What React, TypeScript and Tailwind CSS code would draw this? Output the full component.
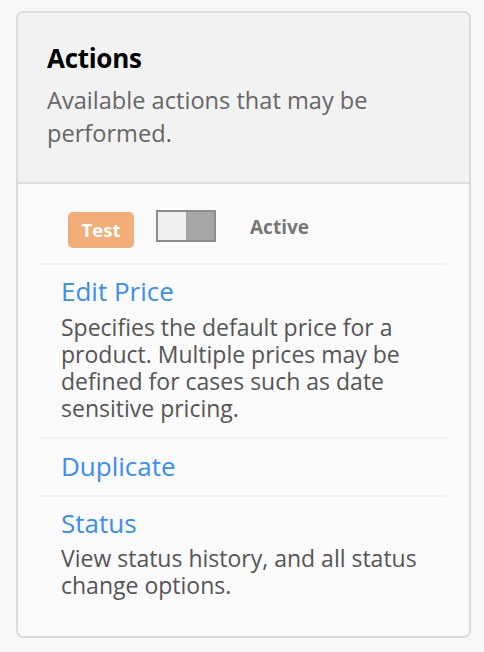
import React from 'react';

const font = { fontFamily: '"Open Sans", "Liberation Sans", sans-serif' };

export default function App() {
  return (
    <div className="min-h-screen bg-[#f7f7f7] pt-[11px] pl-[16px]" style={font}>
      <div className="w-[455px] h-[627px] rounded-[7px] border-2 border-[#dcdcdc] bg-[#fafafa] overflow-hidden flex flex-col">
        {/* header */}
        <div className="h-[171px] shrink-0 bg-[#f2f2f2] border-b-2 border-[#dedede] px-[29px] pt-[29px]">
          <h2 className="text-[26px] leading-[32px] font-bold text-black tracking-[-0.3px]">Actions</h2>
          <p className="mt-[10px] text-[23.6px] leading-[33px] text-[#666]">Available actions that may be performed.</p>
        </div>

        <div className="px-[22px]">
          {/* state row */}
          <div className="h-[81px] flex items-start pl-[28px] pt-[26px] border-b-2 border-[#f0f0f0]">
            <span className="mt-[2px] w-[66px] h-[36px] rounded-[5px] bg-[#f3ad78] text-white font-bold text-[18.5px] leading-[36px] text-center">Test</span>
            <div className="ml-[22px] w-[60px] h-[32px] border-2 border-[#8c8c8c] flex">
              <div className="w-[28px] bg-[#efefef]" />
              <div className="flex-1 bg-[#a6a6a6]" />
            </div>
            <span className="ml-[34px] mt-[5px] font-bold text-[19px] leading-[24px] text-[#777]">Active</span>
          </div>

          {/* Edit Price */}
          <div className="px-[21px] pt-[10px] pb-[15px] border-b-2 border-[#f0f0f0]">
            <div className="text-[26px] leading-[32px] text-[#3a8ef0]">Edit Price</div>
            <p className="mt-[7px] text-[23px] leading-[27px] text-[#555]">
              Specifies the default price for a product. Multiple prices may be defined for cases such as date sensitive pricing.
            </p>
          </div>

          {/* Duplicate */}
          <div className="px-[21px] pt-[11px] pb-[13px] border-b-2 border-[#f0f0f0]">
            <div className="text-[26px] leading-[32px] text-[#3a8ef0]">Duplicate</div>
          </div>

          {/* Status */}
          <div className="px-[21px] pt-[10px]">
            <div className="text-[26px] leading-[32px] text-[#3a8ef0]">Status</div>
            <p className="mt-[6px] text-[23px] leading-[27px] text-[#555]">
              View status history, and all status change options.
            </p>
          </div>
        </div>
      </div>
    </div>
  );
}
